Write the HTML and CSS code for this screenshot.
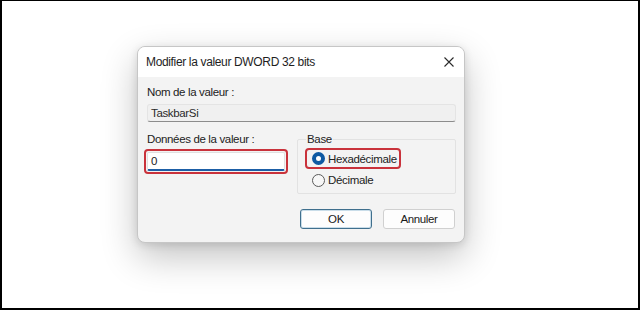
FILE: index.html
```html
<!DOCTYPE html>
<html lang="fr">
<head>
<meta charset="utf-8">
<link rel="stylesheet" href="styles.css">
</head>
<body>
<div class="page">
  <div class="dialog">
    <div class="titlebar">
      <span class="title">Modifier la valeur DWORD 32 bits</span>
      <svg class="close" width="10" height="10" viewBox="0 0 10 10"><path d="M0.5 0.5 L9.5 9.5 M9.5 0.5 L0.5 9.5" stroke="#2b2b2b" stroke-width="1.1" fill="none"/></svg>
    </div>
    <div class="body">
      <div class="label">Nom de la valeur :</div>
      <div class="field">TaskbarSi</div>
      <div class="row">
        <div class="col-left">
          <div class="label">Données de la valeur :</div>
          <div class="hl input-wrap"><div class="input">0</div></div>
        </div>
        <div class="group">
          <div class="legend">Base</div>
          <div class="hl radio-hl">
            <span class="radio checked"></span><span>Hexadécimale</span>
          </div>
          <div class="radio-row">
            <span class="radio"></span><span>Décimale</span>
          </div>
        </div>
      </div>
      <div class="buttons">
        <div class="btn default">OK</div>
        <div class="btn">Annuler</div>
      </div>
    </div>
  </div>
</div>
</body>
</html>
```
FILE: styles.css
```css
html, body { margin: 0; padding: 0; background: #fff; }
body { font-family: "Liberation Sans", Arial, sans-serif; font-size: 11.5px; color: #222; letter-spacing: -0.35px; }
.page {
  box-sizing: border-box;
  width: 640px; height: 310px;
  border: 2px solid #000; border-top-width: 1px;
  padding: 45px 0 0 135px;
  background: #fff;
}
.dialog {
  width: 328px; height: 197px; box-sizing: border-box;
  border-radius: 8px;
  background: #f3f3f3;
  border: 1px solid #c6c6c6;
  box-shadow: 0 14px 36px rgba(0,0,0,0.24), 0 2px 8px rgba(0,0,0,0.12);
  overflow: hidden;
  display: flex; flex-direction: column;
}
.titlebar {
  height: 30px; background: #fff;
  display: flex; align-items: center; justify-content: space-between;
  padding: 0 10px 0 8px;
}
.title { font-size: 12px; color: #1e1e1e; }
.close { display: block; margin-top: -1px; }
.body { padding: 7px 8px 0 9px; display: flex; flex-direction: column; }
.label { line-height: 16px; height: 16px; }
.field {
  margin-top: 4px; height: 18px; box-sizing: border-box;
  background: #f0f0f0;
  border: 1px solid #e4e4e4; border-bottom: 1px solid #8c8c8c;
  border-radius: 3px;
  padding: 0 3px; line-height: 16px; color: #2a2a2a;
}
.row { display: flex; margin-top: 9px; }
.col-left { width: 145px; margin-left: -3px; padding-left: 3px; }
.input-wrap { margin-top: 2px; margin-left: -3px; width: 144px; box-sizing: border-box; padding: 1px; }
.hl { border: 2px solid #c9323b; border-radius: 4px; }
.input {
  height: 19px; box-sizing: border-box; background: #fff;
  border: 1px solid #e0e0e0; border-bottom: 2px solid #1d5ea6; border-radius: 2px;
  padding: 0 3px; line-height: 17px;
}
.group {
  margin-left: 7px; margin-top: 8px; width: 161px; height: 55px; box-sizing: border-box;
  border: 1px solid #e2e2e2; border-radius: 2px;
  position: relative;
  padding: 8px 0 0 7px;
}
.legend {
  position: absolute; top: -9px; left: 8px; background: #f3f3f3; padding: 0 1px; line-height: 16px;
}
.radio-hl {
  display: inline-flex; align-items: center; gap: 3px;
  height: 21px; box-sizing: border-box; padding: 0 2px 0 5px;
}
.radio-row { display: flex; align-items: center; gap: 3px; margin-top: 1px; padding-left: 7px; height: 20px; }
.radio {
  width: 13px; height: 13px; box-sizing: border-box; border-radius: 50%;
  border: 1px solid #5a5a5a; background: #f7f7f7; display: inline-block;
}
.radio.checked { border: 4px solid #0f5aa3; background: #fff; }
.buttons { display: flex; justify-content: flex-end; gap: 11px; margin-top: 15px; padding-right: 1px; }
.btn {
  width: 72px; height: 20px; box-sizing: border-box;
  border: 1px solid #d0d0d0; border-radius: 3px; background: #fdfdfd;
  text-align: center; line-height: 18px; color: #1a1a1a;
}
.btn.default { border: 1px solid #3f6f8d; box-shadow: inset 0 0 0 1px #c9dde9; }
```
